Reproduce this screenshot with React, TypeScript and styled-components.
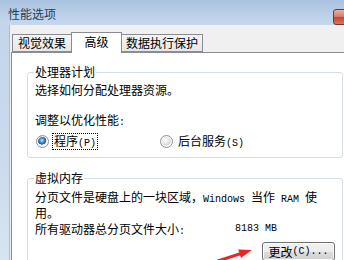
import React from "react";
import styled, { createGlobalStyle } from "styled-components";

const GlobalStyle = createGlobalStyle`
    html, body {
        margin: 0;
        padding: 0;
        width: 344px;
        height: 260px;
        overflow: hidden;
        background: #f0f0f0;
    }
    body {
        font-family: "Noto Sans CJK SC", "Noto Sans", sans-serif;
        font-size: 12px;
        color: #000000;
    }
`;

export default function App() {
    return (
        <>
            <GlobalStyle />
            <Window>
                <TitleBar>
                    <Title>性能选项</Title>
                    <CloseButton aria-label="关闭" />
                </TitleBar>

                <Body>
                    <FrameEdge />
                    <Client>
                        <TabStrip>
                            <Tab $width={60}>视觉效果</Tab>
                            <Tab $width={51} $active>
                                高级
                            </Tab>
                            <Tab $width={82}>数据执行保护</Tab>
                        </TabStrip>

                        <TabPanel>
                            <GroupBox $bottom={8}>
                                <Legend>处理器计划</Legend>
                                <Line $top={3}>
                                    选择如何分配处理器资源。
                                </Line>
                                <Line $top={14}>
                                    调整以优化性能<Latin>:</Latin>
                                </Line>
                                <RadioRow>
                                    <RadioOption>
                                        <Radio $checked />
                                        <FocusLabel>
                                            程序<Latin>(P)</Latin>
                                        </FocusLabel>
                                    </RadioOption>
                                    <RadioOption>
                                        <Radio />
                                        <RadioLabel>
                                            后台服务<Latin>(S)</Latin>
                                        </RadioLabel>
                                    </RadioOption>
                                </RadioRow>
                            </GroupBox>

                            <GroupBox $gap={13} $bottom={12}>
                                <Legend>虚拟内存</Legend>
                                <Paragraph>
                                    分页文件是硬盘上的一块区域，
                                    <Latin>Windows </Latin>当作
                                    <Latin> RAM </Latin>使
                                    <br />
                                    用。
                                </Paragraph>
                                <SizeRow>
                                    <span>
                                        所有驱动器总分页文件大小<Latin>:</Latin>
                                    </span>
                                    <Latin>8183 MB</Latin>
                                </SizeRow>
                                <ButtonRow>
                                    <PushButton>
                                        更改<Latin>(C)...</Latin>
                                    </PushButton>
                                </ButtonRow>
                            </GroupBox>
                        </TabPanel>
                    </Client>
                </Body>

                <Annotation viewBox="0 0 344 260">
                    <line
                        x1="190"
                        y1="270"
                        x2="241"
                        y2="253.5"
                        stroke="#e8262a"
                        strokeWidth="3"
                        strokeLinecap="round"
                    />
                    <polygon
                        points="252,250 238.2,249.6 241,258"
                        fill="#e8262a"
                    />
                </Annotation>
            </Window>
        </>
    );
}

const Window = styled.div`
    position: relative;
    width: 380px;
    height: 260px;
    display: flex;
    flex-direction: column;
`;

const TitleBar = styled.div`
    height: 25px;
    box-sizing: border-box;
    padding: 2px 4px 0 8px;
    display: flex;
    align-items: center;
    background: linear-gradient(#a9c2df, #bcd1e9 60%, #c6d8ec);
`;

const Title = styled.div`
    font-size: 12px;
    line-height: 14px;
    color: #283c55;
    flex: 1;
`;

const CloseButton = styled.div`
    align-self: flex-start;
    margin-top: 7px;
    width: 43px;
    height: 16px;
    box-sizing: border-box;
    border: 1px solid #6b3a36;
    border-radius: 3px;
    background: linear-gradient(#eab0a4, #d87a69 48%, #c54733 52%, #d6745e);
`;

const Body = styled.div`
    flex: 1;
    display: flex;
    min-height: 0;
`;

const FrameEdge = styled.div`
    width: 9px;
    border-right: 1px solid #a9bdd4;
    background: linear-gradient(#c2d5ea, #cbdbed 60%, #d8e4f0);
`;

const Client = styled.div`
    flex: 1;
    background: #f0f0f0;
    padding-top: 7px;
    display: flex;
    flex-direction: column;
`;

const TabStrip = styled.div`
    height: 20px;
    padding-left: 2px;
    display: flex;
    align-items: flex-end;
    position: relative;
    z-index: 1;
`;

const Tab = styled.div<{ $width: number; $active?: boolean }>`
    width: ${(p) => p.$width}px;
    height: ${(p) => (p.$active ? 21 : 18)}px;
    box-sizing: border-box;
    margin-left: ${(p) => (p.$active ? -1 : 0)}px;
    margin-bottom: ${(p) => (p.$active ? -1 : 0)}px;
    padding-bottom: ${(p) => (p.$active ? 3 : 0)}px;
    border: 1px solid #898c95;
    border-bottom: ${(p) => (p.$active ? "none" : "1px solid #898c95")};
    background: ${(p) =>
        p.$active ? "#ffffff" : "linear-gradient(#f5f5f5, #e7e7e7)"};
    position: relative;
    z-index: ${(p) => (p.$active ? 2 : 1)};
    display: flex;
    align-items: center;
    justify-content: center;
    font-size: 12px;
    line-height: 14px;
    & + & {
        margin-left: -1px;
    }
`;

const TabPanel = styled.div`
    flex: 1;
    margin-left: 1px;
    width: 362px;
    box-sizing: border-box;
    background: #ffffff;
    border: 1px solid #898c95;
    border-bottom: none;
    padding: 12px 0 0 15px;
    display: flex;
    flex-direction: column;
    align-items: flex-start;
`;

const GroupBox = styled.fieldset<{ $gap?: number; $bottom: number }>`
    margin: ${(p) => p.$gap ?? 0}px 0 0 0;
    width: 316px;
    min-width: 0;
    box-sizing: border-box;
    border: 1px solid #d5dfe5;
    border-radius: 3px;
    padding: 0 7px ${(p) => p.$bottom}px 7px;
`;

const Legend = styled.legend`
    padding: 0 1px;
    margin-left: -1px;
    font-size: 12px;
    line-height: 14px;
`;

const Line = styled.p<{ $top: number }>`
    margin: ${(p) => p.$top}px 0 0 0;
    line-height: 16px;
`;

const Latin = styled.span`
    font-family: "Liberation Mono", "DejaVu Sans Mono", monospace;
    font-size: 10px;
    line-height: 1;
    white-space: pre;
`;

const RadioRow = styled.div`
    margin-top: 5px;
    padding-left: 1px;
    height: 16px;
    display: grid;
    grid-template-columns: 124px auto;
    align-items: center;
`;

const RadioOption = styled.div`
    display: flex;
    align-items: center;
    gap: 3px;
`;

const Radio = styled.span<{ $checked?: boolean }>`
    width: 13px;
    height: 13px;
    box-sizing: border-box;
    border-radius: 50%;
    border: 1px solid #8e9298;
    background: ${(p) =>
        p.$checked
            ? "radial-gradient(circle at 45% 40%, #cfe9ff 0, #5fa8e6 1.6px, #1e5e9e 3.6px, #2a6aa8 4px, #e9e9e9 4.4px, #fdfdfd 6px)"
            : "radial-gradient(circle at 40% 35%, #ffffff 0, #e4e4e4 4px, #d2d2d2 5.5px, #f6f6f6 6px)"};
    box-shadow: inset 0 0 0 1px #ffffff;
`;

const RadioLabel = styled.span`
    line-height: 14px;
    padding: 0 1px;
    margin-left: 1px;
`;

const FocusLabel = styled(RadioLabel)`
    outline: 1px dotted #000000;
    outline-offset: 0;
`;

const Paragraph = styled.p`
    margin: 4px 0 0 0;
    line-height: 15px;
`;

const SizeRow = styled.div`
    margin-top: 1px;
    line-height: 15px;
    height: 15px;
    display: grid;
    grid-template-columns: 200px auto;
    align-items: center;
`;

const ButtonRow = styled.div`
    margin-top: 6px;
    display: flex;
    justify-content: flex-end;
`;

const PushButton = styled.button`
    width: 73px;
    height: 19px;
    box-sizing: border-box;
    padding: 0;
    border: 1px solid #707070;
    border-radius: 3px;
    background: linear-gradient(#f2f2f2, #ebebeb 50%, #dddddd 51%, #cfcfcf);
    box-shadow: inset 0 0 0 1px #fcfcfc;
    font-family: "Noto Sans CJK SC", "Noto Sans", sans-serif;
    font-size: 12px;
    line-height: 14px;
    color: #000000;
    display: flex;
    align-items: center;
    justify-content: center;
`;

const Annotation = styled.svg`
    position: absolute;
    left: 0;
    top: 0;
    width: 344px;
    height: 260px;
    pointer-events: none;
`;
